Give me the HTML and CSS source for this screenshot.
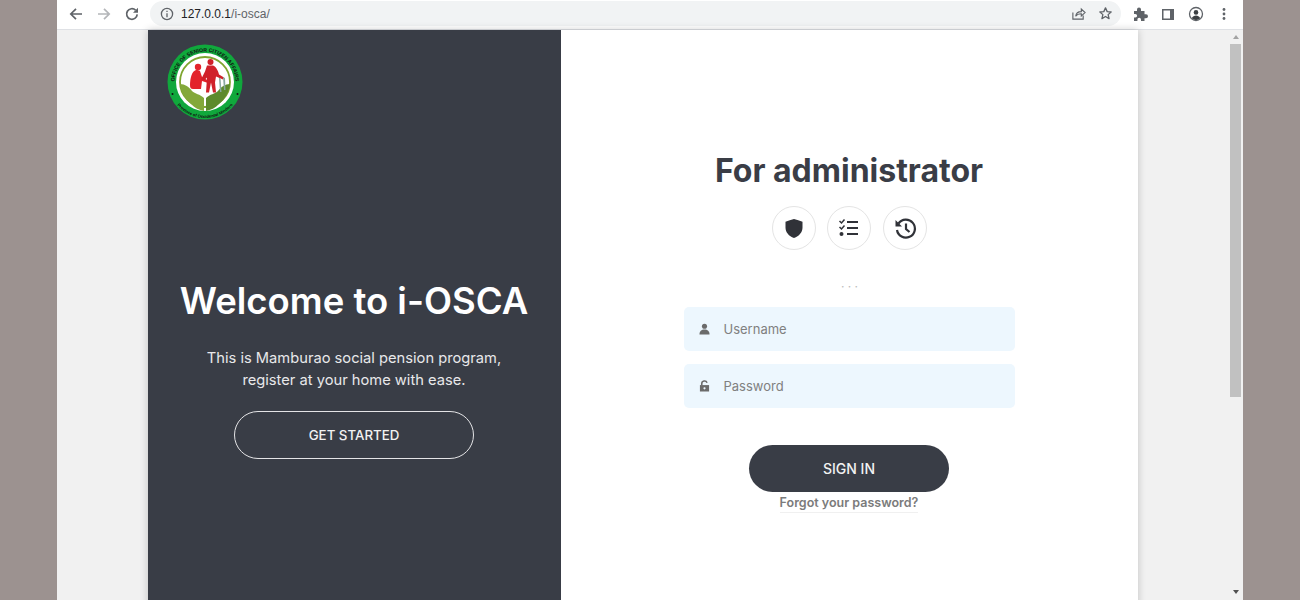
FILE: index.html
```html
<!DOCTYPE html>
<html lang="en">
<head>
<meta charset="utf-8">
<title>i-OSCA</title>
<link rel="stylesheet" href="styles.css">
</head>
<body>
<div class="browser">
  <header class="toolbar">
    <div class="nav">
      <svg class="tb-icon" viewBox="0 0 16 16"><path d="M14 8H3M8 2.800 2.800 8 8 13.200" fill="none" stroke="#5f6368" stroke-width="1.700"/></svg>
      <svg class="tb-icon" viewBox="0 0 16 16"><path d="M2 8h11M8 2.800 13.200 8 8 13.200" fill="none" stroke="#b4b6b9" stroke-width="1.700"/></svg>
      <svg class="tb-icon" viewBox="0 0 16 16"><path d="M13.200 8.400A5.300 5.300 0 1 1 11.600 4.200" fill="none" stroke="#5f6368" stroke-width="1.700"/><path d="M14 1.800v5h-5z" fill="#5f6368"/></svg>
    </div>
    <div class="omnibox">
      <svg class="info" viewBox="0 0 14 14"><circle cx="7" cy="7" r="5.600" fill="none" stroke="#5f6368" stroke-width="1.300"/><path d="M7 6.200v4M7 3.800v1.300" stroke="#5f6368" stroke-width="1.300"/></svg>
      <span class="url"><span class="host">127.0.0.1</span>/i-osca/</span>
      <svg class="om-icon" viewBox="0 0 16 16"><path d="M2 7v7h11V10" fill="none" stroke="#5f6368" stroke-width="1.200"/><path d="M5 11c.4-3.400 3-5 6-5V3.300L15 7l-4 3.700V8.200c-2.500 0-4.700.6-6 2.800z" fill="none" stroke="#5f6368" stroke-width="1.200"/></svg>
      <svg class="om-icon" viewBox="0 0 16 16"><path d="m8 2 1.800 4 4.200.4-3.200 2.800 1 4.200L8 11.200l-3.800 2.200 1-4.200L2 6.400 6.200 6z" fill="none" stroke="#5f6368" stroke-width="1.400" stroke-linejoin="round"/></svg>
    </div>
    <div class="actions">
      <svg class="tb-icon" viewBox="0 0 16 16"><path d="M2 5h3V3.500a2 2 0 0 1 4 0V5h3.500v3.200H14a2 2 0 0 1 0 4h-1.500V15H9v-1.500a1.800 1.800 0 0 0-3.600 0V15H2v-3.500h1.300a1.800 1.800 0 0 0 0-3.600H2z" fill="#5f6368"/></svg>
      <svg class="tb-icon" viewBox="0 0 16 16"><path d="M2 3h12v11H2z" fill="#5f6368"/><path d="M3.500 4.500h6.500v8H3.500z" fill="#fff"/></svg>
      <svg class="tb-icon" viewBox="0 0 16 16"><circle cx="8" cy="8" r="6.500" fill="#fff" stroke="#5f6368" stroke-width="1.300"/><circle cx="8" cy="6.400" r="2.300" fill="#3c4043"/><path d="M3.800 12.300c.8-2 2.500-2.800 4.200-2.800s3.400.8 4.200 2.800A6 6 0 0 1 8 14a6 6 0 0 1-4.200-1.700z" fill="#3c4043"/></svg>
      <svg class="tb-icon" viewBox="0 0 16 16"><circle cx="8" cy="3.500" r="1.400" fill="#5f6368"/><circle cx="8" cy="8" r="1.400" fill="#5f6368"/><circle cx="8" cy="12.500" r="1.400" fill="#5f6368"/></svg>
    </div>
  </header>
  <div class="viewport">
    <div class="page">
      <main class="card">
        <section class="intro">
          <svg class="logo" viewBox="0 0 76 76">
            <defs>
              <path id="arc-top" d="M9.300 48.500A30.500 30.500 0 1 1 66.700 48.500"/>
              <path id="arc-bottom" d="M6.800 56A36 36 0 0 0 69.200 56"/>
            </defs>
            <circle cx="38" cy="38" r="37.500" fill="#10a83c"/>
            <circle cx="38" cy="38" r="29" fill="#fff"/>
            <circle cx="38" cy="38" r="25" fill="none" stroke="#7ea52f" stroke-width="1.800"/>
            <text class="logo-top"><textPath href="#arc-top" startOffset="50%" text-anchor="middle">OFFICE OF SENIOR CITIZEN AFFAIRS</textPath></text>
            <text class="logo-bottom"><textPath href="#arc-bottom" startOffset="50%" text-anchor="middle">Province of Occidental Mindoro</textPath></text>
            <circle cx="5.500" cy="50" r="1" fill="#111"/>
            <circle cx="70.500" cy="50" r="1" fill="#111"/>
            <path d="M13 40c5 0 9 3 12 7 3 3 8 3 12 7v13c-5-1-9-3-13-7-6-5-10-12-11-20z" fill="#83a83a"/>
            <path d="M63 40c-5 0-9 3-12 7-3 3-8 3-12 7v13c5-1 9-3 13-7 6-5 10-12 11-20z" fill="#5d8a2c"/>
            <circle cx="31" cy="23" r="3.200" fill="#e3232b"/>
            <path d="M29 26c-4 1-6 8-6 15 0 3 1 4 3 4h8l1-8 6 2 1-2-7-4-2-6c-1-1-2-1-4-1z" fill="#e3232b"/>
            <circle cx="43.500" cy="18" r="3" fill="#d0212a"/>
            <path d="M40 21.500h6c3 1 5 5 6 9l5 3-1 2-7-3-1 6 1 10h-3l-2-10-2 10h-3l1-15-3 3-3-1 4-8z" fill="#d0212a"/>
            <path d="M52 34h1.500l1 14h-1.500zM56 33l2 1 .5 12h-1.500z" fill="#8aa9a0"/>
          </svg>
          <div class="intro-body">
            <h1 class="welcome">Welcome to i-OSCA</h1>
            <p class="lead">This is Mamburao social pension program,<br>register at your home with ease.</p>
            <a class="btn-outline">GET STARTED</a>
          </div>
        </section>
        <section class="login">
          <h2 class="login-title">For administrator</h2>
          <div class="circles">
            <span class="circle"><svg class="c-icon" viewBox="0 0 24 24"><path d="M12 3c3 .9 5.500 1.800 8.500 2.800v5.700c0 4.800-3.400 8.700-8.500 10.500-5.100-1.800-8.500-5.700-8.500-10.500V5.800C6.500 4.800 9 3.900 12 3z" fill="#303238"/></svg></span>
            <span class="circle"><svg class="c-icon" viewBox="0 0 24 24"><path d="M10 6h11M10 12h11M10 18h11" stroke="#303238" stroke-width="2.200" fill="none"/><path d="m2.500 5 2 2 3-3.500M2.500 11l2 2 3-3.500" stroke="#303238" stroke-width="1.500" fill="none"/><circle cx="4.500" cy="18" r="2" fill="#303238"/></svg></span>
            <span class="circle"><svg class="c-icon" viewBox="0 0 24 24"><path d="M5.500 7.500A9 9 0 1 1 4 14" fill="none" stroke="#303238" stroke-width="2.200"/><path d="M2.500 4v6.500H9z" fill="#303238"/><path d="M13 7.500V13l3.500 3" fill="none" stroke="#303238" stroke-width="2.200"/></svg></span>
          </div>
          <div class="dots">· · ·</div>
          <div class="field">
            <svg class="f-icon" viewBox="0 0 12 12"><circle cx="6" cy="3" r="2.800" fill="#6b6b6b"/><path d="M.5 12c0-3.800 2.200-5.500 5.500-5.500s5.500 1.700 5.500 5.500z" fill="#6b6b6b"/></svg>
            <span class="placeholder">Username</span>
          </div>
          <div class="field">
            <svg class="f-icon" viewBox="0 0 12 12"><path d="M3 5.500V3.500a3 3 0 0 1 5.800-1" fill="none" stroke="#6b6b6b" stroke-width="1.700"/><path d="M1 5h10v7H1z" fill="#6b6b6b"/><circle cx="6" cy="8.500" r="1.200" fill="#edf7fe"/></svg>
            <span class="placeholder">Password</span>
          </div>
          <a class="btn-solid">SIGN IN</a>
          <a class="forgot">Forgot your password?</a>
        </section>
      </main>
    </div>
    <div class="scrollbar">
      <span class="arrow-up"></span>
      <span class="thumb"></span>
      <span class="arrow-down"></span>
    </div>
  </div>
</div>
</body>
</html>
```
FILE: styles.css
```css
* { box-sizing: border-box; }
html, body { margin: 0; height: 600px; overflow: hidden; }
body { background: #9c9290; font-family: Inter, "Liberation Sans", sans-serif; display: flex; justify-content: center; }
.browser { width: 1186px; height: 600px; display: flex; flex-direction: column; overflow: hidden; background: #f1f1f1; }

.toolbar { height: 30px; flex: none; display: flex; align-items: center; background: #fff; border-bottom: 1px solid #dfe1e5; padding: 1px 0 3px; }
.nav { display: flex; align-items: center; gap: 12px; padding-left: 11px; width: 93px; flex: none; }
.tb-icon { width: 16px; height: 16px; flex: none; }
.omnibox { width: 971px; height: 25px; flex: none; display: flex; align-items: center; background: #f1f3f4; border-radius: 13px; padding: 0 8px 0 10px; }
.info { width: 14px; height: 14px; flex: none; }
.url { font-family: "Liberation Sans", sans-serif; font-size: 12px; color: #5f6368; margin-left: 7px; flex: 1; }
.host { color: #202124; }
.om-icon { width: 15px; height: 15px; margin-left: 12px; flex: none; }
.actions { display: flex; align-items: center; gap: 12px; padding-left: 11px; }

.viewport { flex: 1; display: flex; min-height: 0; }
.page { flex: 1; display: flex; justify-content: center; min-width: 0; }
.card { width: 990px; height: 620px; display: flex; background: #fff; box-shadow: 0 0 8px rgba(0, 0, 0, .2); }

.intro { width: 413px; flex: none; background: #393d46; color: #fff; padding: 14px 0 0 19px; }
.logo { display: block; width: 76px; height: 76px; }
.logo-top { font: 700 5.200px "Liberation Sans", sans-serif; fill: #111; }
.logo-bottom { font: 700 4.200px "Liberation Sans", sans-serif; fill: #111; }
.intro-body { width: 412px; margin: 156px 0 0 -19px; display: flex; flex-direction: column; align-items: center; }
.welcome { margin: 0; font-size: 36.500px; line-height: 50px; font-weight: 600; white-space: nowrap; }
.lead { margin: 21px 0 0; font-size: 14.700px; line-height: 22px; text-align: center; color: #e8e8ea; }
.btn-outline { margin-top: 20px; width: 240px; height: 48px; border: 1px solid #e4e4e6; border-radius: 24px; display: flex; align-items: center; justify-content: center; font-size: 13.300px; font-weight: 500; color: #f2f2f2; }

.login { flex: 1; display: flex; flex-direction: column; align-items: center; padding-top: 119px; }
.login-title { margin: 0 1px 0 0; font-size: 32px; line-height: 44px; font-weight: 700; color: #3a3d46; white-space: nowrap; }
.circles { margin: 13px 1px 0 0; display: flex; gap: 11.500px; }
.circle { width: 44px; height: 44px; border: 1px solid #e4e4e4; border-radius: 50%; display: flex; align-items: center; justify-content: center; }
.c-icon { width: 24px; height: 24px; }
.dots { margin-top: 30px; height: 14px; line-height: 14px; font-size: 12px; color: #bbb; }
.field { margin-top: 13px; width: 331px; height: 44px; background: #edf7fe; border-radius: 5px; display: flex; align-items: center; padding-left: 15px; }
.f-icon { width: 11px; height: 12px; flex: none; }
.placeholder { margin-left: 13.500px; font-size: 13px; color: #808080; }
.btn-solid { margin: 37px 1px 0 0; width: 200px; height: 47px; background: #393d46; border-radius: 24px; color: #f2f2f2; font-size: 14px; font-weight: 500; display: flex; align-items: center; justify-content: center; padding-bottom: 1px; }
.forgot { margin: 2px 1px 0 0; font-size: 12.500px; line-height: 18px; font-weight: 600; color: #7b7b7b; border-bottom: 1px solid #f0f0f0; }

.scrollbar { width: 14px; flex: none; display: flex; flex-direction: column; align-items: center; background: #f1f1f1; }
.arrow-up { margin-top: 5px; width: 0; height: 0; border: 3.500px solid transparent; border-top: 0; border-bottom: 4px solid #a3a3a3; }
.thumb { margin: 5px 0 0 1px; align-self: flex-start; width: 11px; height: 353px; background: #c1c1c1; }
.arrow-down { margin-top: auto; margin-bottom: 6px; width: 0; height: 0; border: 3.500px solid transparent; border-bottom: 0; border-top: 4px solid #505050; }
```
